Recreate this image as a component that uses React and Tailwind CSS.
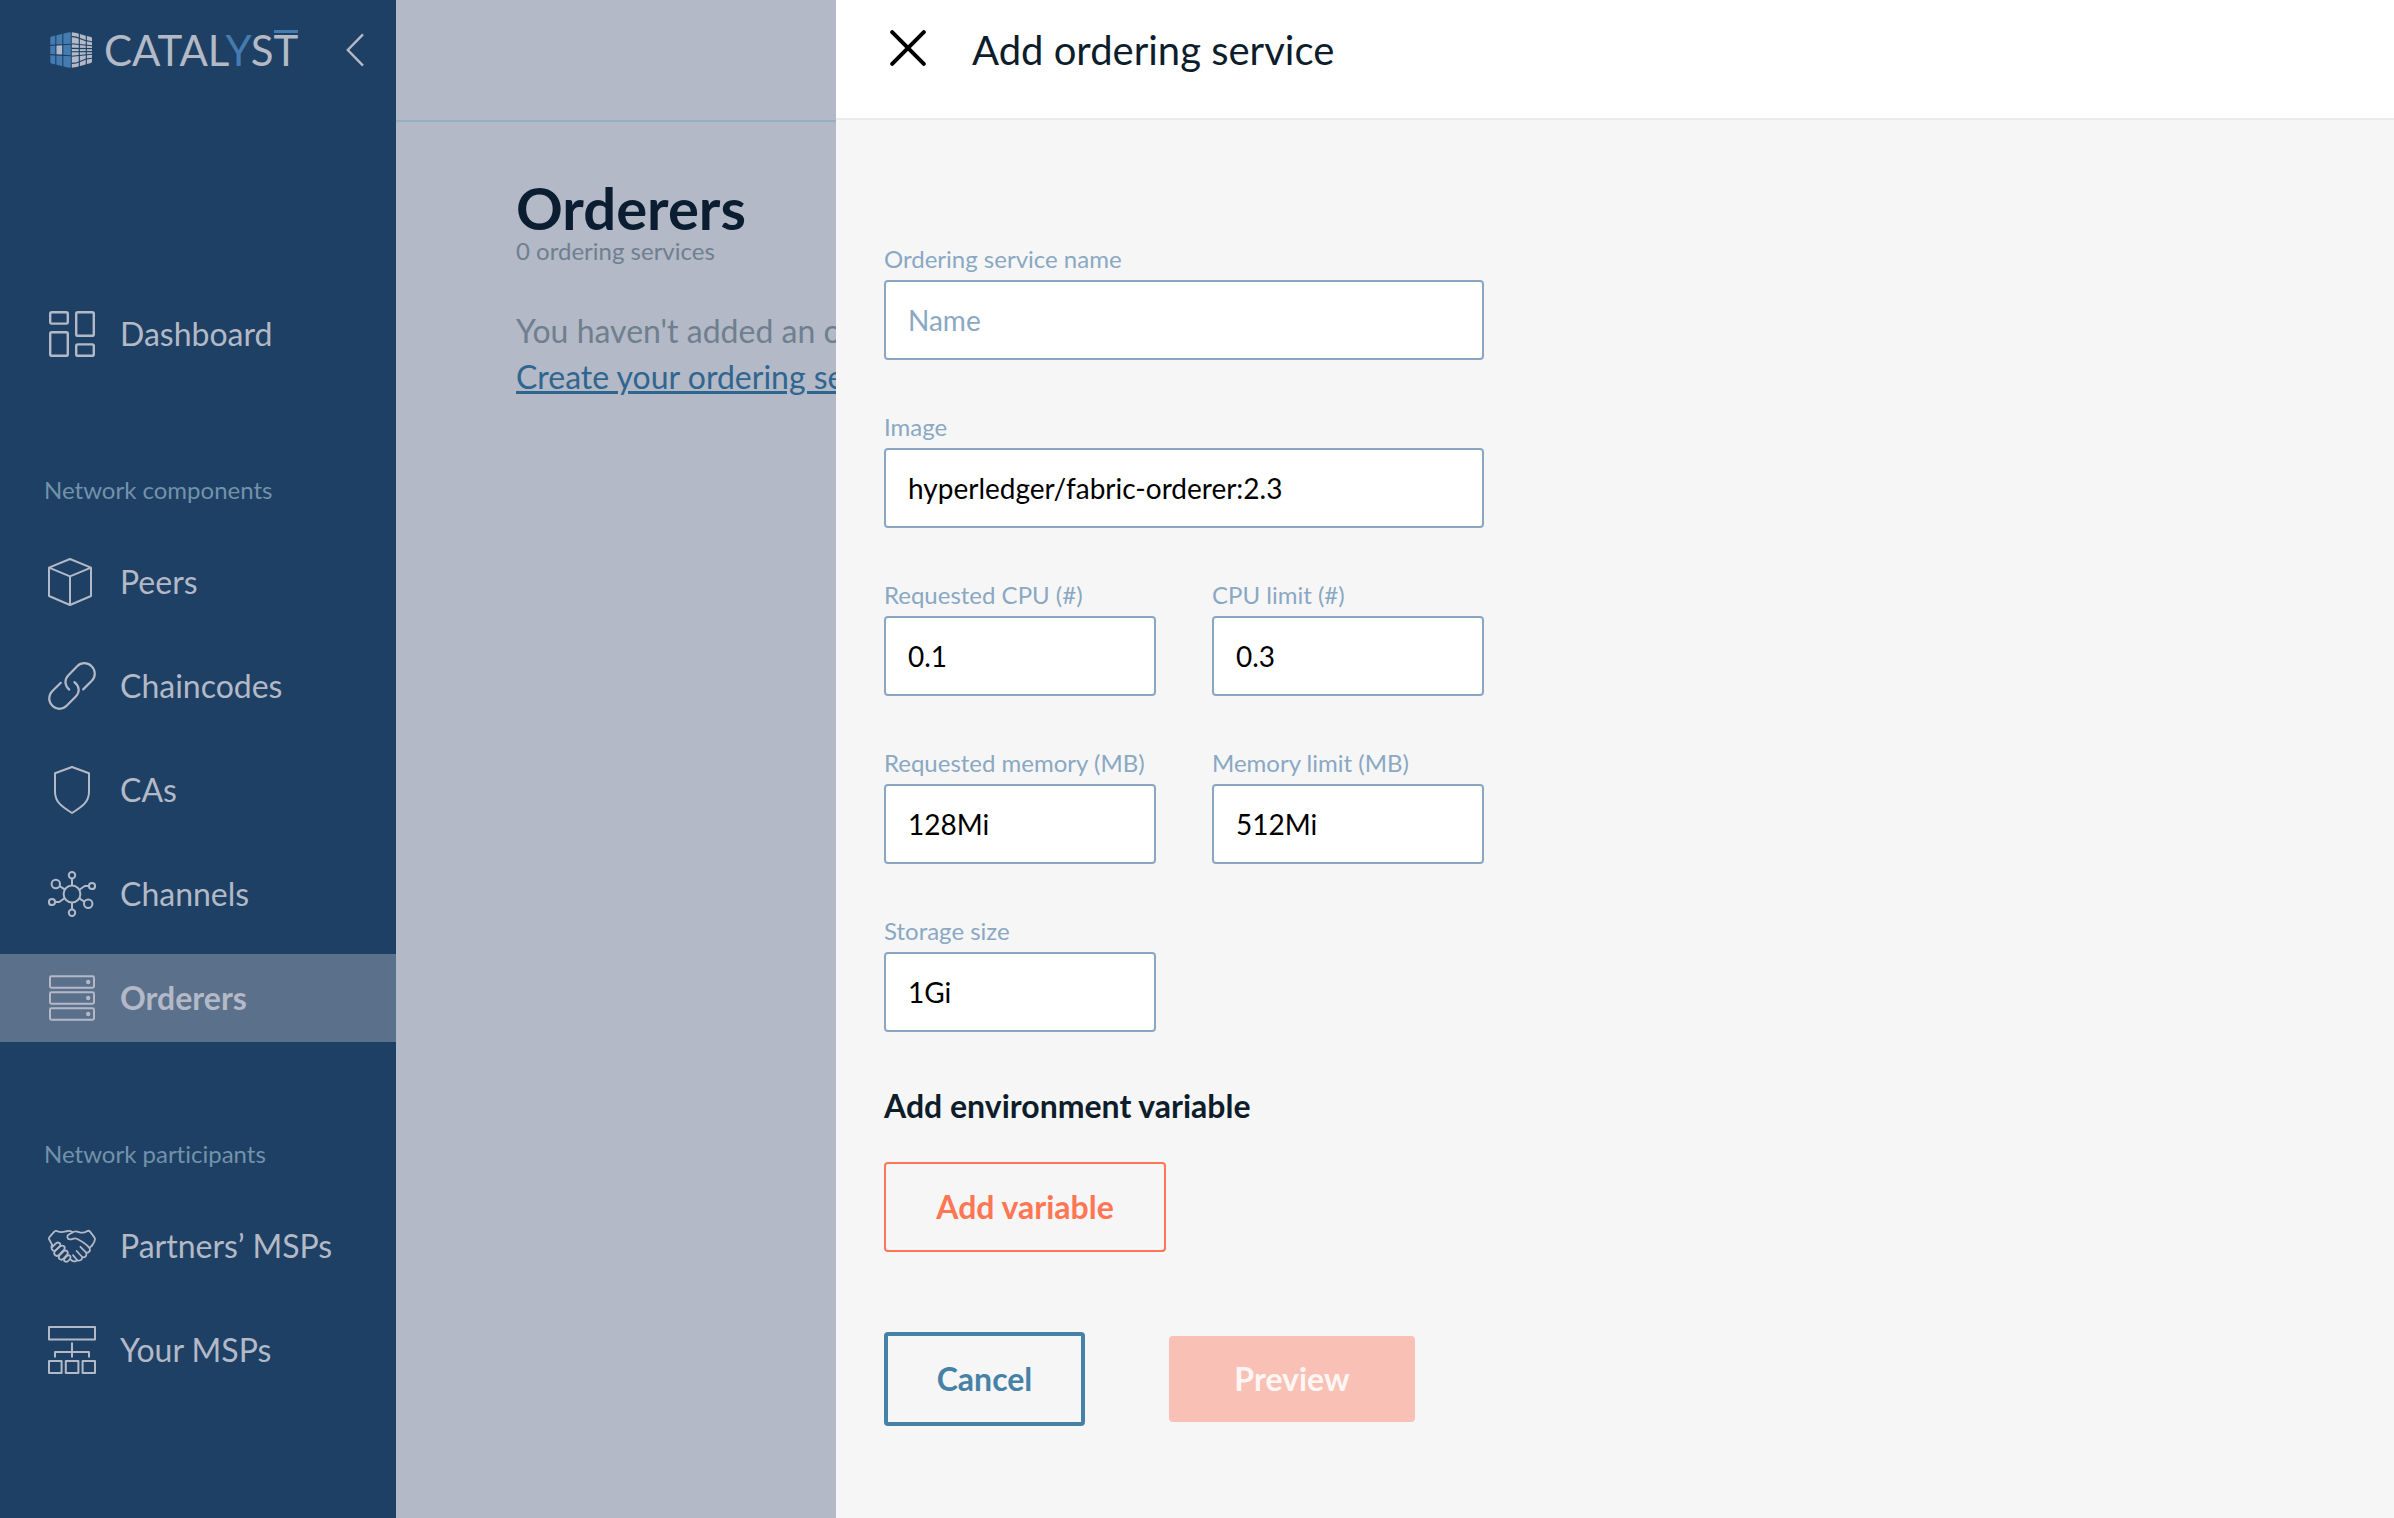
import React from "react";

function CubeMark() {
  return (
    <svg viewBox="0 0 42 36" className="h-9 w-[42px] shrink-0" aria-hidden="true">
      <path d="M0.3 6 Q0.3 5 1.3 4.6 L19 0.2 Q20.8 0 20.8 1 V35 Q20.8 36 19 35.8 L1.3 31.4 Q0.3 31 0.3 30 Z" fill="#447bb0" />
      <rect x="6.3" y="13" width="6" height="9.6" rx="1" fill="#b3b9c6" />
      <path d="M21.8 0.3 L26.5 1 L34 3.2 L41 5 Q42 5.4 42 6.4 V29.6 Q42 30.6 41 31 L26.5 35 L21.8 35.7 Z" fill="#b3b9c6" />
      <g fill="none" stroke="#1e4064" strokeWidth="1.1">
        <path d="M5.8 2 V34 M12.8 0 V36" />
        <path d="M0 13.4 L21 12.2 M0 22.6 L21 23.8" />
        <path d="M29.3 0 V36 M36.3 2 V34" />
        <path d="M21.5 4.6 C30 4.2 31 9.6 42 9.8" />
        <path d="M21.5 31.4 C30 31.8 31 26.4 42 26.2" />
        <path d="M21.5 11.8 L42 13.8 M21.5 24.2 L42 22.2" />
        <path d="M21.5 16.4 L42 16.6 M21.5 19.8 L42 19.6" />
      </g>
    </svg>
  );
}

function Logo() {
  return (
    <a href="#home" className="flex items-center gap-3" aria-label="Catalyst">
      <CubeMark />
      <span className="text-[42px] leading-10 text-[#b3b9c6]">
        CATAL<span className="text-[#447bb0]">Y</span>S
        <span className="relative inline-block">
          T
          <span className="absolute inset-x-0 top-0 h-[3px] bg-[#447bb0]" />
        </span>
      </span>
    </a>
  );
}

function Icon({ children, width = 2 }) {
  return (
    <svg
      viewBox="0 0 48 48"
      className="size-12 shrink-0"
      fill="none"
      stroke="currentColor"
      strokeWidth={width}
      strokeLinejoin="round"
      aria-hidden="true"
    >
      {children}
    </svg>
  );
}

const DashboardIcon = () => (
  <Icon width={2.4}>
    <rect x="2.2" y="2.2" width="17.6" height="11.4" rx="1.6" />
    <rect x="28.2" y="2.2" width="17.6" height="23.6" rx="1.6" />
    <rect x="2.2" y="22.2" width="17.6" height="23.6" rx="1.6" />
    <rect x="28.2" y="34.4" width="17.6" height="11.4" rx="1.6" />
  </Icon>
);

const CubeIcon = () => (
  <Icon>
    <path d="M22 1 L43 9.6 V38 L22 47 L1 38 V9.6 Z M1 9.6 L22 18.4 L43 9.6 M22 18.4 V47" />
  </Icon>
);

const ChainIcon = () => (
  <Icon width={2.2}>
    <g strokeLinecap="round">
      <path d="M21.2 27.6 C16.2 23 16.4 17.4 20.4 13.2 L29.2 4.2 C33.2 0.2 39.4 0.2 43.6 4.2 C47.8 8.2 47.8 14.6 43.8 18.8 L35.2 27.4" />
      <path d="M26.4 20.2 C31.8 24.6 32 30 27.8 34.4 L18.6 43.8 C14.6 47.8 8.4 47.8 4.4 43.8 C0.2 39.8 0.2 33.4 4.2 29.2 L12.8 20.8" />
    </g>
  </Icon>
);

const ShieldIcon = () => (
  <Icon>
    <path d="M24 1 L41 7.2 V26 C41 36 34 40.8 24 47 C14 40.8 7 36 7 26 V7.2 Z" />
  </Icon>
);

const NetworkIcon = () => (
  <Icon>
    <circle cx="24" cy="24" r="8.4" />
    <circle cx="24" cy="5.2" r="3.2" />
    <circle cx="24" cy="42.8" r="3.2" />
    <circle cx="7.8" cy="14" r="4.2" />
    <circle cx="40.2" cy="33.8" r="4.2" />
    <circle cx="44" cy="16" r="3.1" />
    <circle cx="4" cy="32" r="3.1" />
    <path d="M24 8.4 V15.6 M24 32.4 V39.6 M11.6 16.2 L16.8 19.4 M31.2 28.4 L36.4 31.6 M31.4 19.8 L36.8 16 H40.8 M16.6 28.2 L11.2 32 H7.2" />
  </Icon>
);

const ServersIcon = () => (
  <Icon>
    <rect x="2" y="2.3" width="44" height="11.4" rx="1.4" />
    <rect x="2" y="18.3" width="44" height="11.4" rx="1.4" />
    <rect x="2" y="34.3" width="44" height="11.4" rx="1.4" />
    <g fill="currentColor" stroke="none">
      <circle cx="40.2" cy="8" r="2.2" />
      <circle cx="40.2" cy="24" r="2.2" />
      <circle cx="40.2" cy="40" r="2.2" />
    </g>
  </Icon>
);

const HandshakeIcon = () => (
  <Icon width={1.8}>
    <g strokeLinecap="round">
      <path d="M4 22.6 L1 17 C0.8 16.2 1 15.8 1.4 15.2 L6.6 9.4 C7.6 8.6 9 8.8 10.2 9.6 C13.6 10.8 16.6 9.6 19.6 9 C22 8.8 23.4 9.4 24.8 10.2" />
      <path d="M44 23.6 C45.6 21.6 47 18.8 47 17 C47 16.4 46.8 16 46.4 15.4 L42 9.6 C41 8.4 39.4 8.8 38.4 9.6 C35.6 11.6 32.8 10.8 30 9.8 C27.6 9 25.6 9.6 23.4 11 L20.4 12.8 C18.6 14 19.2 17.4 21.8 17.4 C24.6 17.4 26.4 15.6 28.8 16.8 C33.2 19 38.6 22.6 41.4 25.8" />
      <path d="M44 23.4 L41.6 25.8 C42.6 28.4 41.6 30.8 38.4 30.8 C38.8 33.8 37.4 35.8 34.4 35.4 C33.8 38.2 31.4 39.4 29 38.2 C27.4 40.2 24.2 39.4 22.4 37.4" />
      <path d="M32.4 24.8 L38.2 30.6 M28.6 29 L34.2 35 M25 33.2 L29 38" />
      <path d="M4 22.8 C2.4 26 4 29.4 7 28.8 L12.2 23.8 C13 21 10.2 19.6 8.2 21.2 L4.2 25" />
      <path d="M6.6 29.4 C5.2 32.6 7.8 35 10.6 33.4 L16.4 27.4 C17.6 24.4 14.8 22.6 12.4 24.2 Z" />
      <path d="M11.2 33.6 C9.8 36.8 12.6 38.8 15 37 L19.4 32.4 C20.8 29.4 18 27.6 15.8 29 Z" />
      <path d="M16.2 37 C15.4 39.4 18 40.6 20.2 39 L22 37 C23.6 34.6 21.4 32.4 19.4 33.6 Z" />
    </g>
  </Icon>
);

const OrgIcon = () => (
  <Icon>
    <rect x="1" y="1" width="46" height="12.6" />
    <rect x="1" y="35" width="12.6" height="12" />
    <rect x="17.8" y="35" width="12.6" height="12" />
    <rect x="34.6" y="35" width="12.4" height="12" />
    <path d="M24 16.6 V31.6 M7 31.6 V26 H41 V31.6" />
  </Icon>
);

function NavItem({ icon: Glyph, label, active }) {
  return (
    <a
      href={"#" + label}
      aria-current={active ? "page" : undefined}
      className={
        active
          ? "flex h-22 items-center gap-6 bg-[#5b718b] px-12 text-[32px] font-bold text-[#b3b9c6]"
          : "flex h-22 items-center gap-6 px-12 text-[32px] text-[#b3b9c6]"
      }
    >
      <Glyph />
      <span className="whitespace-nowrap">{label}</span>
    </a>
  );
}

function NavSection({ title, children }) {
  return (
    <section className="mt-24 flex flex-col gap-8">
      <h2 className="px-11 text-2xl leading-8 text-[#7292ab]">{title}</h2>
      <div className="flex flex-col gap-4">{children}</div>
    </section>
  );
}

function Sidebar() {
  return (
    <aside className="w-[396px] shrink-0 bg-[#1e4064]">
      <div className="flex h-[100px] items-center justify-between pr-8 pl-[50px]">
        <Logo />
        <button type="button" aria-label="Collapse menu" className="text-[#b3b9c6]">
          <svg viewBox="0 0 18 34" className="h-[34px] w-[18px]" fill="none" stroke="currentColor" strokeWidth="2.4" aria-hidden="true">
            <path d="M17 1.4 L1.8 17 L17 32.6" />
          </svg>
        </button>
      </div>
      <nav className="mt-[190px]">
        <NavItem icon={DashboardIcon} label="Dashboard" />
        <NavSection title="Network components">
          <NavItem icon={CubeIcon} label="Peers" />
          <NavItem icon={ChainIcon} label="Chaincodes" />
          <NavItem icon={ShieldIcon} label="CAs" />
          <NavItem icon={NetworkIcon} label="Channels" />
          <NavItem icon={ServersIcon} label="Orderers" active />
        </NavSection>
        <NavSection title="Network participants">
          <NavItem icon={HandshakeIcon} label="Partners’ MSPs" />
          <NavItem icon={OrgIcon} label="Your MSPs" />
        </NavSection>
      </nav>
    </aside>
  );
}

function Field({ id, label, value, placeholder }) {
  return (
    <div className="flex flex-col gap-0.5">
      <label htmlFor={id} className="text-2xl leading-[38px] whitespace-nowrap text-[#8aa8c3]">
        {label}
      </label>
      <input
        id={id}
        type="text"
        defaultValue={value}
        placeholder={placeholder}
        className="h-20 w-full rounded border-2 border-[#8aa8c3] bg-white px-[22px] text-[28px] text-black placeholder:text-[#8aa8c3]"
      />
    </div>
  );
}

function OrderingServiceForm() {
  return (
    <form className="px-12 pt-[120px] pb-16">
      <div className="flex max-w-[600px] flex-col gap-12">
        <Field id="name" label="Ordering service name" placeholder="Name" />
        <Field id="image" label="Image" value="hyperledger/fabric-orderer:2.3" />
        <div className="grid grid-cols-2 gap-x-14 gap-y-12">
          <Field id="cpu" label="Requested CPU (#)" value="0.1" />
          <Field id="cpu-limit" label="CPU limit (#)" value="0.3" />
          <Field id="memory" label="Requested memory (MB)" value="128Mi" />
          <Field id="memory-limit" label="Memory limit (MB)" value="512Mi" />
          <Field id="storage" label="Storage size" value="1Gi" />
        </div>
      </div>
      <h2 className="mt-[50px] text-[32px] leading-12 font-bold text-[#0d1d2b]">Add environment variable</h2>
      <button type="button" className="mt-8 h-[90px] min-w-[282px] rounded border-2 border-[#ff7654] px-12 text-[32px] font-bold text-[#ff7654]">
        Add variable
      </button>
      <div className="mt-20 flex items-center gap-[84px]">
        <button type="button" className="h-[94px] min-w-[201px] rounded border-4 border-[#4682a6] px-12 text-[32px] font-bold text-[#4682a6]">
          Cancel
        </button>
        <button type="submit" disabled className="h-[86px] min-w-[246px] rounded bg-[#f9c1b5] px-16 text-[32px] font-bold text-[#fdf6f4]">
          Preview
        </button>
      </div>
    </form>
  );
}

function Drawer() {
  return (
    <div role="dialog" aria-labelledby="drawer-title" className="absolute inset-y-0 right-0 left-[440px] bg-[#f6f6f6]">
      <header className="flex h-[120px] items-start gap-[46px] border-b-2 border-[#e9eaea] bg-white px-[54px] pt-[26px]">
        <button type="button" aria-label="Close" className="mt-1">
          <svg viewBox="0 0 36 36" className="size-9" fill="none" stroke="#000" strokeWidth="4" strokeLinecap="round" aria-hidden="true">
            <path d="M2.2 2.2 L33.8 33.8 M33.8 2.2 L2.2 33.8" />
          </svg>
        </button>
        <h1 id="drawer-title" className="text-[40px] leading-12 text-[#0d1d2b]">
          Add ordering service
        </h1>
      </header>
      <OrderingServiceForm />
    </div>
  );
}

export default function App() {
  return (
    <div className="flex min-h-screen font-['Lato',sans-serif] [font-variant-ligatures:none]">
      <Sidebar />
      <div className="relative min-w-0 flex-1 overflow-hidden bg-[#b3b9c6]">
        <div className="h-[122px] border-b-2 border-[#95aec1]" />
        <main className="px-[120px] pt-[58px]">
          <h1 className="text-[58px] leading-14 font-bold text-[#0b1d30]">Orderers</h1>
          <p className="text-2xl leading-[30px] text-[#6f7f8f]">0 ordering services</p>
          <p className="mt-[42px] text-[32px] leading-[46px] text-[#6f7f8f]">
            You haven't added an ordering service yet.
            <br />
            <a href="#create" className="text-[#2f6690] underline">
              Create your ordering service
            </a>
          </p>
        </main>
        <Drawer />
      </div>
    </div>
  );
}
